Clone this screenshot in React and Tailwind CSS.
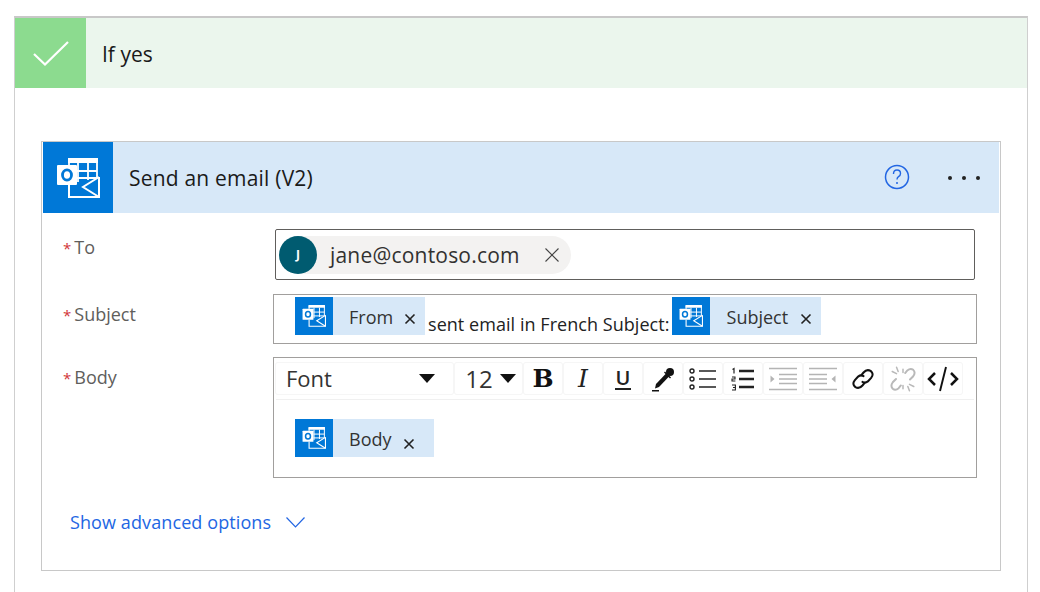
import React from "react";

const OutlookIcon = ({ size }) => (
  <svg width={size} height={size * 40 / 44} viewBox="0 0 44 40" fill="none">
    <path d="M13 8V1h28v19" stroke="#fff" strokeWidth="1.800" />
    <rect x="12" y="0" width="30" height="5" fill="#fff" />
    <path d="M21 13h20M21 20h20M22 5v19M32 5v17" stroke="#fff" strokeWidth="1.800" />
    <path d="M43 19L27 29l16 10" stroke="#fff" strokeWidth="2" />
    <path d="M43 19v20H13V27" stroke="#fff" strokeWidth="2" />
    <rect x="1" y="7" width="20" height="20" rx="1" fill="#fff" />
    <ellipse cx="11" cy="17" rx="4.500" ry="5.200" stroke="#0078d7" strokeWidth="2.800" />
  </svg>
);

const Token = ({ label, w, textGap, xGap, xDown }) => (
  <span className={`flex h-[38px] shrink-0 bg-[#d7e8f8] ${w}`}>
    <span className="flex h-[38px] w-[38px] shrink-0 items-center justify-center bg-[#0078d7]">
      <OutlookIcon size={24} />
    </span>
    <span className={`text-[18px] leading-[41px] text-[#333] ${textGap}`}>{label}</span>
    <svg className={`${xGap} ${xDown}`} width="12" height="12" viewBox="0 0 12 12" fill="none" stroke="#222" strokeWidth="1.600">
      <path d="M1.500 1.500l9 9M10.500 1.500l-9 9" />
    </svg>
  </span>
);

const Label = ({ children }) => (
  <div className="w-[209px] shrink-0 pl-[21px] text-[18px] text-[#605e5c]">
    <span className="mr-[3px] text-[15px] text-[#d13438]">*</span>
    {children}
  </div>
);

const Btn = ({ w, children }) => (
  <span className={`flex h-[31px] shrink-0 items-center justify-center rounded-[2px] bg-white shadow-[0_0_0_1px_#f6f6f6] ${w}`}>
    {children}
  </span>
);

const Bullets = () => (
  <svg width="28" height="24" viewBox="0 0 28 24" fill="none" stroke="#222">
    <circle cx="3" cy="4" r="2" strokeWidth="1.400" />
    <circle cx="3" cy="12" r="2" strokeWidth="1.400" />
    <circle cx="3" cy="20" r="2" strokeWidth="1.400" />
    <path d="M10 4h17M10 12h17M10 20h17" strokeWidth="1.600" />
  </svg>
);

const Numbers = () => (
  <svg width="24" height="24" viewBox="0 0 24 24" fill="none" stroke="#222">
    <path d="M1.500 2.500l1.500-1v5" strokeWidth="1.200" />
    <path d="M1 10h3v2H1v2h3.400M1 18h3.400v2.500H2h2.400V23H1" strokeWidth="1.100" />
    <path d="M8 4h15M8 12h15M8 20h15" strokeWidth="2.400" />
  </svg>
);

const Indent = ({ flip }) => (
  <svg width="28" height="24" viewBox="0 0 28 24" fill="none" stroke="#b4b4b4" strokeWidth="1.600" className={flip ? "-scale-x-100" : ""}>
    <path d="M0 1.500h28M10 7.500h18M10 12h18M10 16.500h18M0 22.500h28" />
    <path d="M1.500 8.500l4 3.500-4 3.500z" fill="#b4b4b4" stroke="none" />
  </svg>
);

const Link = () => (
  <svg width="26" height="26" viewBox="0 0 24 24" fill="none" stroke="#111" strokeWidth="1.900" strokeLinecap="round">
    <path d="M10.500 8.500l2-2.500q3-3.500 6.500-1.500 3.500 2.800 0.500 6.500l-3 3.200q-2.500 2-5 0.500" />
    <path d="M13.500 15.500l-2 2.500q-3 3.500-6.500 1.500-3.500-2.800-0.500-6.500l3-3.200q2.500-2 5-0.500" />
  </svg>
);

const Unlink = () => (
  <svg width="28" height="28" viewBox="0 0 26 26" fill="none" stroke="#b9b9b9" strokeWidth="1.800" strokeLinecap="round">
    <path d="M15 7.500l2-2.500q3-2.500 5.500-0.500 2.500 2.500 0 6l-3 3" />
    <path d="M11 19l-2 2.500q-3 2.500-5.500 0.500-2.500-2.500 0-6l3-3" />
    <path d="M7 2l1.500 4M3 6l4 2M19 24l-1.500-4M23 20l-4-2M13 4v3M13 19v3" strokeWidth="1.400" />
  </svg>
);

export default function App() {
  return (
    <div className="h-[592px] w-[1040px] overflow-hidden bg-white pl-[14px] pt-[16px] font-['Open_Sans','Noto_Sans',sans-serif]">
      <div className="h-[600px] w-[1014px] border-x border-t-2 border-x-[#cfcfcf] border-t-[#c8c8c8]">
        <div className="flex h-[70px] items-center bg-[#ebf6ed]">
          <div className="flex h-[70px] w-[71px] items-center justify-center bg-[#8cdb8f]">
            <svg width="36" height="25" viewBox="0 0 36 25" fill="none" stroke="#fff" strokeWidth="2.200">
              <path d="M1 13l11 10.500L35 1" />
            </svg>
          </div>
          <span className="ml-[16px] mt-[4px] text-[21px] text-[#1a1a1a]">If yes</span>
        </div>

        <div className="ml-[26px] mt-[53px] h-[430px] w-[960px] border border-[#c8c8c8]">
          <div className="ml-px flex h-[71px] w-[956px] items-center bg-[#d7e8f8]">
            <div className="flex h-[71px] w-[70px] items-center justify-center bg-[#0078d7]">
              <OutlookIcon size={44} />
            </div>
            <span className="ml-[16px] mt-[3px] text-[21px] tracking-[0.2px] text-[#1a1a1a]">Send an email (V2)</span>
            <svg className="mb-[2px] ml-auto" width="26" height="26" viewBox="0 0 26 26" fill="none" stroke="#2266e3" strokeWidth="1.500">
              <circle cx="13" cy="13" r="11.500" />
              <path d="M9.500 10q0-4 3.500-4t3.500 3.500q0 2-2 3.200-1.500 1-1.500 2.800" strokeWidth="1.400" />
              <circle cx="13" cy="19" r="1" fill="#2266e3" stroke="none" />
            </svg>
            <span className="ml-[38px] mr-[19px] flex gap-[10px]">
              <i className="h-[4px] w-[4px] rounded-full bg-[#222]" />
              <i className="h-[4px] w-[4px] rounded-full bg-[#222]" />
              <i className="h-[4px] w-[4px] rounded-full bg-[#222]" />
            </span>
          </div>

          <div className="mt-[16px] flex">
            <div className="pt-[5px]"><Label>To</Label></div>
            <div className="ml-[24px] flex h-[51px] w-[700px] items-center rounded-[2px] border border-[#605e5c] pl-[3px]">
              <span className="flex h-[38px] w-[292px] items-center rounded-full bg-[#f3f2f1]">
                <span className="flex h-[38px] w-[38px] items-center justify-center rounded-full bg-[#005b70] text-[12px] font-bold text-white">J</span>
                <span className="ml-[13px] mt-[2px] text-[21px] tracking-[0.2px] text-[#323130]">jane@contoso.com</span>
                <svg className="ml-[25px]" width="14" height="14" viewBox="0 0 14 14" fill="none" stroke="#444" strokeWidth="1.100">
                  <path d="M0.500 0.500l13 13M13.500 0.500l-13 13" />
                </svg>
              </span>
            </div>
          </div>

          <div className="mt-[14px] flex">
            <div className="pt-[7px]"><Label>Subject</Label></div>
            <div className="ml-[22px] flex h-[50px] w-[704px] items-start border border-[#a19f9d] pl-[21px] pt-[2px]">
              <Token label="From" w="w-[130px]" textGap="ml-[16px]" xGap="ml-[11px]" xDown="mt-[16px]" />
              <span className="ml-[3px] mt-[15px] text-[18px] leading-[24px] tracking-[0.05px] text-[#222]">sent email in French Subject:</span>
              <span className="ml-[2px]">
                <Token label="Subject" w="w-[149px]" textGap="ml-[17px]" xGap="ml-[12px]" xDown="mt-[16px]" />
              </span>
            </div>
          </div>

          <div className="mt-[13px] flex">
            <div className="pt-[7px]"><Label>Body</Label></div>
            <div className="ml-[22px] h-[121px] w-[704px] border border-[#a19f9d] pt-[4px]">
              <div className="mx-[2px] flex h-[38px] gap-[2px] border-b border-[#f0f0f0] pt-[1px]">
                <Btn w="w-[177px]">
                  <span className="flex w-full items-center justify-between pl-[10px] pr-[18px] text-[22px] text-[#333]">
                    Font
                    <svg width="16" height="9" viewBox="0 0 16 9" fill="#111"><path d="M0 0h16L8 9z" /></svg>
                  </span>
                </Btn>
                <Btn w="w-[67px]">
                  <span className="flex items-center gap-[7px] pl-[4px] text-[24px] text-[#333]">
                    12
                    <svg width="16" height="9" viewBox="0 0 16 9" fill="#111"><path d="M0 0h16L8 9z" /></svg>
                  </span>
                </Btn>
                <Btn w="w-[38px]"><span className="font-['DejaVu_Serif',serif] text-[25px] font-bold text-[#111]">B</span></Btn>
                <Btn w="w-[38px]"><span className="font-['DejaVu_Serif',serif] text-[25px] italic text-[#222]">I</span></Btn>
                <Btn w="w-[38px]">
                  <span className="border-b-2 border-[#222] px-px text-[20px] font-semibold leading-[21px] text-[#222]">U</span>
                </Btn>
                <Btn w="w-[38px]">
                  <svg width="24" height="26" viewBox="0 0 24 26" fill="#111">
                    <path d="M15.500 7l3 3L8 21l-4 1.500L5 18z" />
                    <path d="M14 5.500L20 11.500l-1 1-6-6z" />
                    <circle cx="19" cy="6" r="4" />
                    <path d="M1 24h7v1.500H1z" />
                  </svg>
                </Btn>
                <Btn w="w-[38px]"><Bullets /></Btn>
                <Btn w="w-[38px]"><Numbers /></Btn>
                <Btn w="w-[38px]"><Indent /></Btn>
                <Btn w="w-[38px]"><Indent flip /></Btn>
                <Btn w="w-[38px]"><Link /></Btn>
                <Btn w="w-[38px]"><Unlink /></Btn>
                <Btn w="w-[38px]">
                  <svg width="32" height="26" viewBox="0 0 32 26" fill="none" stroke="#111" strokeWidth="2.500">
                    <path d="M8 7l-6 6 6 6M24 7l6 6-6 6" />
                    <path d="M19 1l-6 24" strokeWidth="1.900" />
                  </svg>
                </Btn>
              </div>
              <div className="ml-[21px] mt-[19px]">
                <Token label="Body" w="w-[139px]" textGap="ml-[16px]" xGap="ml-[11px]" xDown="mt-[19px]" />
              </div>
            </div>
          </div>

          <div className="ml-[28px] mt-[31px] flex items-center text-[#2266e3]">
            <span className="text-[18px] tracking-[0.1px]">Show advanced options</span>
            <svg className="ml-[15px]" width="19" height="11" viewBox="0 0 19 11" fill="none" stroke="#2266e3" strokeWidth="1.200">
              <path d="M0.500 0.500l9 9.500 9-9.500" />
            </svg>
          </div>
        </div>
      </div>
    </div>
  );
}
